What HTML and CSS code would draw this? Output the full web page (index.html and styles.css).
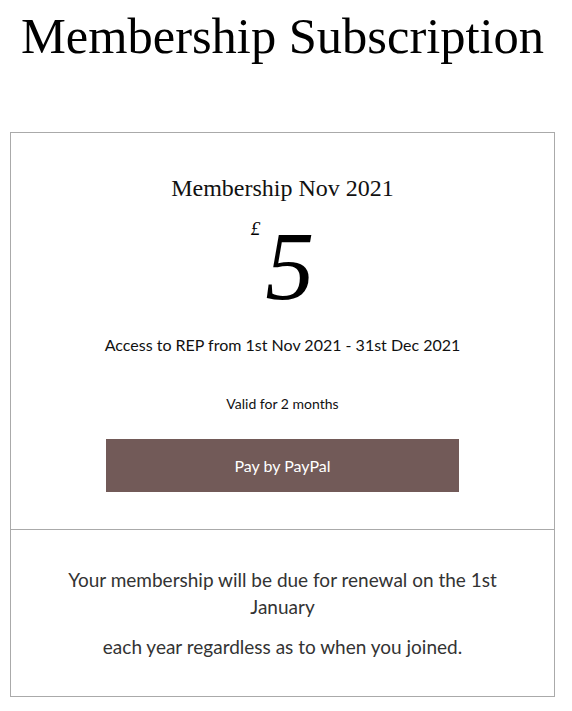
FILE: index.html
```html
<!DOCTYPE html>
<html>
<head>
<meta charset="utf-8">
<link rel="stylesheet" href="styles.css">
</head>
<body>
<h1 class="page-title">Membership Subscription</h1>
<div class="card">
  <div class="plan">
    <h2 class="plan-name">Membership Nov 2021</h2>
    <div class="price"><span class="currency">£</span><span class="amount">5</span></div>
    <p class="plan-desc">Access to REP from 1st Nov 2021 - 31st Dec 2021</p>
    <p class="plan-valid">Valid for 2 months</p>
    <button class="pay-btn">Pay by PayPal</button>
  </div>
  <div class="note">
    <p class="note-line">Your membership will be due for renewal on the 1st January</p>
    <p class="note-line">each year regardless as to when you joined.</p>
  </div>
</div>
</body>
</html>
```

FILE: styles.css
```css
* { box-sizing: border-box; }
html, body { margin: 0; padding: 0; background: #fff; }
body { padding: 0 17px 0 10px; }

.page-title {
  font-family: "Liberation Serif", serif;
  font-weight: normal;
  font-size: 50.5px;
  line-height: 58px;
  text-align: center;
  margin: 7px 0 67px;
  color: #000;
}

.card {
  border: 1px solid #aaa;
  width: 545px;
}

.plan {
  display: flex;
  flex-direction: column;
  align-items: center;
  padding: 40px 0 37px;
  border-bottom: 1px solid #aaa;
}

.plan-name {
  font-family: "Liberation Serif", serif;
  font-weight: normal;
  font-size: 24px;
  line-height: 30px;
  margin: 0;
  color: #111;
}

.price {
  display: flex;
  align-items: flex-start;
  margin-top: 13px;
  height: 100px;
}
.currency {
  font-family: "Liberation Serif", serif;
  font-style: italic;
  font-size: 19px;
  margin-top: 2px;
  margin-right: 5px;
}
.amount {
  font-family: "Liberation Serif", serif;
  font-style: italic;
  font-size: 98px;
  line-height: 100px;
}

.plan-desc {
  font-family: "Lato", sans-serif;
  font-size: 16px;
  margin: 19px 0 0;
  color: #111;
}
.plan-valid {
  font-family: "Lato", sans-serif;
  font-size: 14px;
  margin: 41px 0 0;
  color: #111;
}
.pay-btn {
  margin-top: 27px;
  width: 353px;
  height: 53px;
  background: #725a58;
  color: #fff;
  border: none;
  font-family: "Lato", sans-serif;
  font-size: 16px;
}

.note {
  padding: 36px 50px 36px;
  text-align: center;
}
.note-line {
  font-family: "Lato", sans-serif;
  font-weight: 400;
  font-size: 19px;
  line-height: 27px;
  color: #333;
  margin: 0 0 13px;
}
.note-line:last-child { margin-bottom: 0; }
```
